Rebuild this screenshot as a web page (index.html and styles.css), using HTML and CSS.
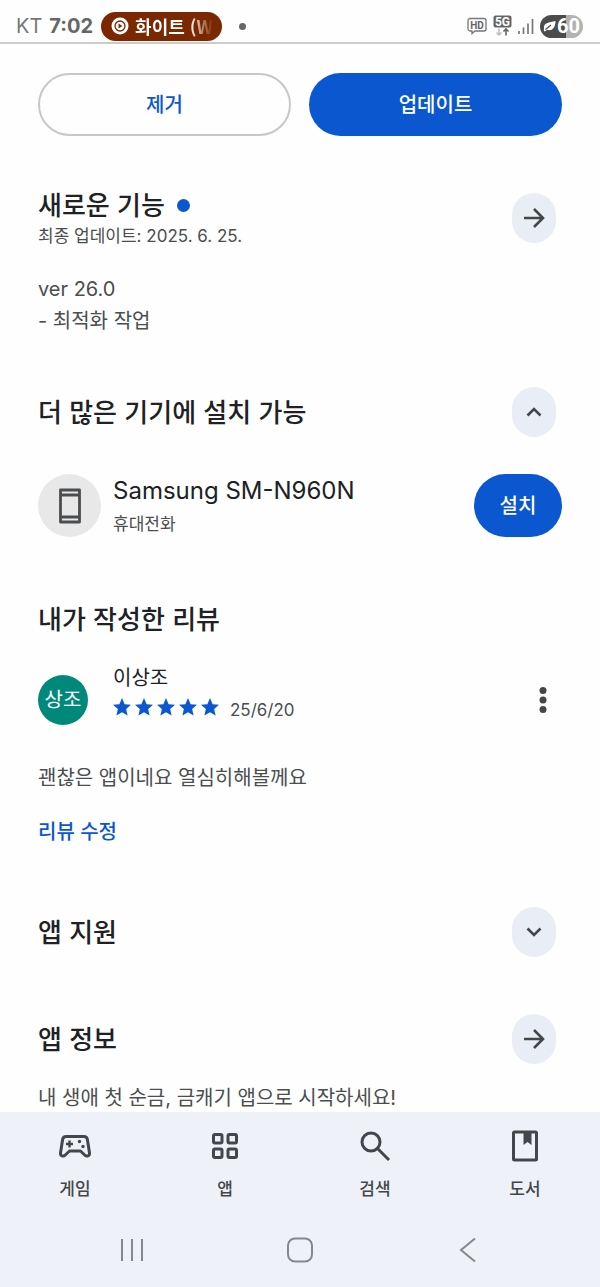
FILE: index.html
```html
<!DOCTYPE html>
<html lang="ko">
<head>
<meta charset="utf-8">
<meta name="viewport" content="width=device-width, initial-scale=1">
<title>앱 상세정보</title>
<link rel="stylesheet" href="styles.css">
</head>
<body>
<header class="status">
  <span class="carrier">KT</span>
  <span class="clock">7:02</span>
  <span class="now-playing">
    <svg class="now-icon" viewBox="0 0 18 18" aria-hidden="true"><circle cx="9" cy="9" r="8.500" fill="#fff"/><circle cx="9" cy="9" r="5" fill="none" stroke="#7b2800" stroke-width="1.300"/><path d="M7.500 6.500v5l4-2.500z" fill="#7b2800"/></svg>
    <span class="now-text">화이트 (W</span>
  </span>
  <span class="status-dot"></span>
  <span class="status-icons">
    <svg width="20" height="18" viewBox="0 0 20 18" role="img" aria-label="HD"><path d="M3 1.500h14a2 2 0 0 1 2 2v8.500a2 2 0 0 1-2 2H8l-3 2.500V14H3a2 2 0 0 1-2-2V3.500a2 2 0 0 1 2-2z" fill="none" stroke="#777" stroke-width="1.300"/><text class="hd-text" x="10" y="11.500" text-anchor="middle">HD</text></svg>
    <svg width="19" height="22" viewBox="0 0 19 22" role="img" aria-label="5G"><rect x="0.500" y="0.500" width="18" height="12" rx="2" fill="#666"/><text class="g-text" x="9.500" y="10.500" text-anchor="middle">5G</text><path d="M6 13.500v6.500M3.500 17.500L6 20l2.500-2.500" fill="none" stroke="#bbb" stroke-width="1.400"/><path d="M13 20.500V14M10.500 16.500L13 14l2.500 2.500" fill="none" stroke="#666" stroke-width="1.600"/></svg>
    <svg width="16" height="18" viewBox="0 0 16 18" aria-hidden="true"><path d="M1 14v3M5.500 10.500V17M10 6.500V17M14.500 2v15" stroke="#777" stroke-width="1.700"/></svg>
    <span class="battery"><svg width="13" height="12" viewBox="0 0 13 12" aria-hidden="true"><path d="M1 8.500C0 3 6 2.500 12.500 1 12.500 7 9.500 11.500 4.500 9.800L1.500 11.500 0.800 10.800z" fill="#fff"/><path d="M2.500 9.500L8 5" stroke="#4c4c4c" stroke-width="1.100"/></svg>60</span>
  </span>
</header>

<main class="content">
  <div class="actions">
    <button class="btn btn-outline" type="button">제거</button>
    <button class="btn btn-filled" type="button">업데이트</button>
  </div>

  <section class="whats-new">
    <div class="section-head">
      <div>
        <h2 class="title">새로운 기능<span class="new-dot"></span></h2>
        <p class="updated">최종 업데이트: 2025. 6. 25.</p>
      </div>
      <button class="round" type="button" aria-label="새로운 기능 더보기"><svg class="icon" viewBox="0 0 24 24"><path d="M2 12h18.500M12 3l9 9-9 9"/></svg></button>
    </div>
    <p class="notes">ver 26.0<br>- 최적화 작업</p>
  </section>

  <section class="devices">
    <div class="section-head">
      <h2 class="title">더 많은 기기에 설치 가능</h2>
      <button class="round" type="button" aria-label="접기"><svg class="icon" viewBox="0 0 24 24"><path d="M5.500 15.500L12 9l6.500 6.500"/></svg></button>
    </div>
    <div class="device">
      <span class="device-icon"><svg width="24" height="36" viewBox="0 0 24 36" aria-hidden="true"><path d="M2.500 2h19v32h-19zM2.500 7h19M2.500 29h19" fill="none" stroke="#4b4d4f" stroke-width="2.800" stroke-linejoin="round"/></svg></span>
      <div class="device-text">
        <p class="device-name">Samsung SM-N960N</p>
        <p class="device-kind">휴대전화</p>
      </div>
      <button class="btn btn-filled btn-install" type="button">설치</button>
    </div>
  </section>

  <section class="my-review">
    <h2 class="title">내가 작성한 리뷰</h2>
    <div class="reviewer">
      <span class="avatar">상조</span>
      <div class="reviewer-text">
        <p class="reviewer-name">이상조</p>
        <div class="rating">
          <span class="stars" role="img" aria-label="별표 5개">
            <svg viewBox="0 0 20 20"><path d="M10 0l2.900 6.900 7.100.6-5.400 4.700L16.200 19.500 10 15.700 3.800 19.500l1.600-7.300L0 7.500l7.100-.6z"/></svg>
            <svg viewBox="0 0 20 20"><path d="M10 0l2.900 6.900 7.100.6-5.400 4.700L16.200 19.500 10 15.700 3.800 19.500l1.600-7.300L0 7.500l7.100-.6z"/></svg>
            <svg viewBox="0 0 20 20"><path d="M10 0l2.900 6.900 7.100.6-5.400 4.700L16.200 19.500 10 15.700 3.800 19.500l1.600-7.300L0 7.500l7.100-.6z"/></svg>
            <svg viewBox="0 0 20 20"><path d="M10 0l2.900 6.900 7.100.6-5.400 4.700L16.200 19.500 10 15.700 3.800 19.500l1.600-7.300L0 7.500l7.100-.6z"/></svg>
            <svg viewBox="0 0 20 20"><path d="M10 0l2.900 6.900 7.100.6-5.400 4.700L16.200 19.500 10 15.700 3.800 19.500l1.600-7.300L0 7.500l7.100-.6z"/></svg>
          </span>
          <span class="date">25/6/20</span>
        </div>
      </div>
      <button class="more" type="button" aria-label="옵션 더보기"><svg width="8" height="28" viewBox="0 0 8 28"><circle cx="4" cy="4.500" r="3.500"/><circle cx="4" cy="14" r="3.500"/><circle cx="4" cy="23.500" r="3.500"/></svg></button>
    </div>
    <p class="review-body">괜찮은 앱이네요 열심히해볼께요</p>
    <a class="edit" href="#edit">리뷰 수정</a>
  </section>

  <section class="support">
    <div class="section-head">
      <h2 class="title">앱 지원</h2>
      <button class="round" type="button" aria-label="펼치기"><svg class="icon" viewBox="0 0 24 24"><path d="M5.500 8.500L12 15l6.500-6.500"/></svg></button>
    </div>
  </section>

  <section class="about">
    <div class="section-head">
      <h2 class="title">앱 정보</h2>
      <button class="round" type="button" aria-label="앱 정보 더보기"><svg class="icon" viewBox="0 0 24 24"><path d="M2 12h18.500M12 3l9 9-9 9"/></svg></button>
    </div>
    <p class="summary">내 생애 첫 순금, 금캐기 앱으로 시작하세요!</p>
  </section>
</main>

<footer class="bottom">
  <nav class="tabs">
    <a class="tab" href="#games"><svg viewBox="0 0 34 34"><path d="M8 7.500h18c2 0 3 1 3.400 3l2.100 13.500c.4 3-2.800 4-4.800 2L22.500 22h-11l-4.200 4c-2 2-5.200 1-4.800-2L4.600 10.500c.4-2 1.400-3 3.400-3z"/><path d="M11.500 11.500v7M8 15h7" stroke-width="2.400"/><g class="solid"><circle cx="21.500" cy="12.500" r="1.700"/><circle cx="25" cy="17.500" r="1.700"/></g></svg>게임</a>
    <a class="tab" href="#apps"><svg viewBox="0 0 34 34"><rect x="5.500" y="5.500" width="8.500" height="8.500" rx="1.500"/><rect x="20" y="5.500" width="8.500" height="8.500" rx="1.500"/><rect x="5.500" y="20" width="8.500" height="8.500" rx="1.500"/><rect x="20" y="20" width="8.500" height="8.500" rx="1.500"/></svg>앱</a>
    <a class="tab" href="#search"><svg viewBox="0 0 34 34"><circle cx="13" cy="13" r="9"/><path d="M19.500 19.500L31 31"/></svg>검색</a>
    <a class="tab" href="#books"><svg viewBox="0 0 34 34"><rect x="5.500" y="3" width="23" height="28" rx="1"/><path class="solid" d="M15.500 3h8v13l-4-3-4 3z"/></svg>도서</a>
  </nav>
  <div class="system">
    <button class="sys" type="button" aria-label="최근 앱"><svg viewBox="0 0 28 28"><path d="M4 3v22M14 3v22M24 3v22"/></svg></button>
    <button class="sys" type="button" aria-label="홈"><svg viewBox="0 0 28 28"><rect x="2" y="2.500" width="24" height="23" rx="7"/></svg></button>
    <button class="sys" type="button" aria-label="뒤로"><svg viewBox="0 0 28 28"><path d="M21 2.500L7 14l14 11.500"/></svg></button>
  </div>
</footer>
</body>
</html>
```

FILE: styles.css
```css
* { box-sizing: border-box; }
body {
  margin: 0;
  min-height: 100vh;
  display: flex;
  flex-direction: column;
  background: #fefefe;
  color: #202124;
  font-family: Inter, "Noto Sans CJK KR", sans-serif;
}
h2, p { margin: 0; }
button { font-family: inherit; border: 0; padding: 0; background: none; cursor: pointer; }
a { text-decoration: none; }

.status {
  display: flex;
  align-items: center;
  height: 44px;
  padding: 10px 17px 0 16px;
  border-bottom: 2px solid #ccc;
  color: #666;
}
.carrier { font-size: 20px; color: #777; }
.clock { margin-left: 7px; font-size: 20px; font-weight: 700; }
.now-playing {
  display: flex;
  align-items: center;
  gap: 6px;
  width: 121px;
  height: 29px;
  margin-left: 8px;
  padding-left: 10px;
  border-radius: 15px;
  background: #7b2800;
}
.now-icon { width: 18px; height: 18px; }
.now-text {
  font-family: "Noto Sans CJK KR", sans-serif;
  font-size: 18px;
  font-weight: 700;
  line-height: 28px;
  white-space: nowrap;
  color: transparent;
  background: linear-gradient(90deg, #fff 70%, #7b2800 100%);
  background-clip: text;
  -webkit-background-clip: text;
}
.status-dot { width: 7px; height: 7px; margin-left: 17px; border-radius: 50%; background: #666; }
.status-icons { display: flex; align-items: center; gap: 6px; margin-left: auto; }
.hd-text { font: 700 10px Roboto, sans-serif; fill: #666; }
.g-text { font: 700 12px Roboto, sans-serif; fill: #fff; }
.battery {
  display: flex;
  align-items: center;
  justify-content: center;
  gap: 1px;
  width: 43px;
  height: 23px;
  border-radius: 12px;
  background: linear-gradient(90deg, #4c4c4c 60%, #b3b3b3 60%);
  color: #fff;
  font: 700 20px Roboto, sans-serif;
}

.content { flex: 1; padding: 29px 38px 0; }
.actions { display: grid; grid-template-columns: 1fr 1fr; gap: 18px; }
.btn { height: 63px; padding-bottom: 2px; border-radius: 32px; font-size: 20px; font-weight: 500; }
.btn-outline { border: 2px solid #c6c7c8; color: #0b57d0; }
.btn-filled { background: #0b57d0; color: #fff; }

.section-head {
  display: flex;
  align-items: center;
  justify-content: space-between;
  padding-right: 6px;
}
.title {
  padding-bottom: 2px;
  font-family: "Noto Sans CJK KR", sans-serif;
  font-size: 26px;
  font-weight: 500;
  line-height: 28px;
}
.new-dot {
  display: inline-block;
  width: 13px;
  height: 13px;
  margin-left: 12px;
  border-radius: 50%;
  background: #0b57d0;
  vertical-align: 3px;
}
.round {
  display: flex;
  align-items: center;
  justify-content: center;
  width: 44px;
  height: 50px;
  border-radius: 22px;
  background: #e8edf6;
}
.icon { width: 24px; height: 24px; fill: none; stroke: #444749; stroke-width: 2.6; }

.whats-new { margin-top: 54px; }
.updated { margin-top: 6px; font-size: 17px; line-height: 20px; color: #4b4d4f; }
.notes { margin-top: 27px; font-size: 20px; line-height: 32px; color: #4b4d4f; }

.devices { margin-top: 50px; }
.device { display: flex; align-items: center; margin-top: 37px; }
.device-icon {
  display: flex;
  align-items: center;
  justify-content: center;
  width: 63px;
  height: 63px;
  border-radius: 50%;
  background: #e8e8e8;
}
.device-text { flex: 1; margin-left: 12px; }
.device-name { font-size: 24px; line-height: 34px; }
.device-kind { margin-top: 3px; font-size: 17px; line-height: 26px; color: #4b4d4f; }
.btn-install { width: 88px; }

.my-review { margin-top: 67px; }
.reviewer { display: flex; align-items: center; margin-top: 30px; }
.avatar {
  width: 50px;
  height: 50px;
  border-radius: 50%;
  background: #00897b;
  color: #fff;
  font-size: 20px;
  line-height: 50px;
  text-align: center;
}
.reviewer-text { flex: 1; margin-left: 25px; padding-bottom: 14px; }
.reviewer-name { font-size: 20px; line-height: 28px; }
.rating { display: flex; align-items: center; height: 30px; }
.stars { display: flex; gap: 4px; }
.stars svg { width: 18px; height: 18px; fill: #0b57d0; }
.date { margin-left: 11px; padding-top: 6px; font-size: 17px; line-height: 24px; color: #4b4d4f; }
.more { width: 38px; height: 48px; }
.more svg { display: block; margin: 0 auto; fill: #444749; }
.review-body { margin-top: 27px; font-size: 20px; line-height: 30px; color: #4b4d4f; }
.edit { display: block; margin-top: 24px; font-size: 20px; font-weight: 500; line-height: 30px; color: #0b57d0; }

.support { margin-top: 60px; }
.about { margin-top: 57px; }
.summary { margin-top: 20px; font-size: 20px; line-height: 28px; color: #4b4d4f; }

.bottom { position: sticky; bottom: 0; padding-top: 17px; background: #eef2f8; }
.tabs { display: grid; grid-template-columns: repeat(4, 1fr); }
.tab {
  display: flex;
  flex-direction: column;
  align-items: center;
  gap: 14px;
  color: #444749;
  font-size: 17px;
  font-weight: 500;
  line-height: 24px;
}
.tab svg { width: 34px; height: 34px; fill: none; stroke: #444749; stroke-width: 3; stroke-linejoin: round; }
.tab .solid { fill: #444749; stroke: none; }
.system { display: grid; grid-template-columns: repeat(3, 1fr); padding: 35px 8% 23px; }
.sys { display: flex; justify-content: center; }
.sys svg { width: 28px; height: 28px; fill: none; stroke: #85878b; stroke-width: 2; }
```
